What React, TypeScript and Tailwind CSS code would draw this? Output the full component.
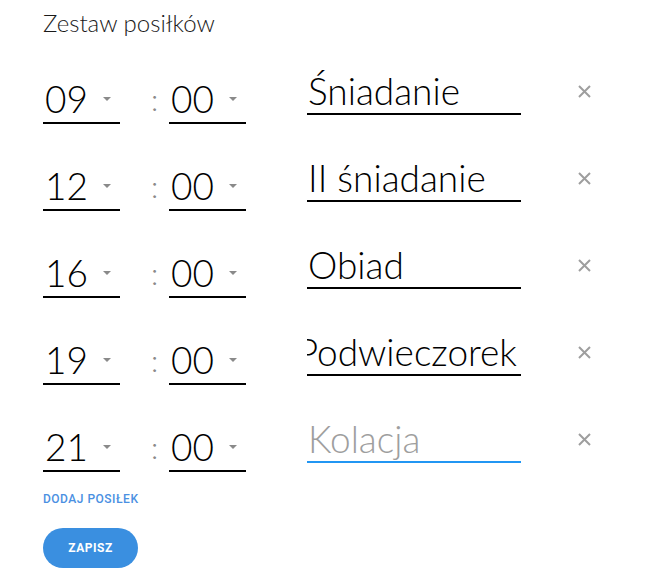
import React from 'react';

type Meal = { hour: string; minute: string; name: string; placeholder?: boolean; overflow?: boolean; focused?: boolean };

const meals: Meal[] = [
  { hour: '09', minute: '00', name: 'Śniadanie' },
  { hour: '12', minute: '00', name: 'II śniadanie' },
  { hour: '16', minute: '00', name: 'Obiad' },
  { hour: '19', minute: '00', name: 'Podwieczorek', overflow: true },
  { hour: '21', minute: '00', name: 'Kolacja', placeholder: true, focused: true },
];

function TimeSelect({ value }: { value: string }) {
  return (
    <div className="mt-[9px] w-[77px] h-[47px] border-b-2 border-black flex items-start justify-between">
      <span className="pl-[2px] text-[37px] leading-[43px] font-light text-black">{value}</span>
      <span className="mt-[20px] mr-[9px] w-0 h-0 border-l-[4px] border-r-[4px] border-t-[4px] border-l-transparent border-r-transparent border-t-[#8a8a8a]" />
    </div>
  );
}

function CloseIcon() {
  return (
    <svg width="13" height="13" viewBox="0 0 13 13" className="mt-[17px] ml-[57px]">
      <path d="M1 1L12 12M12 1L1 12" stroke="#9e9e9e" strokeWidth="2" strokeLinecap="butt" />
    </svg>
  );
}

function MealRow({ meal }: { meal: Meal }) {
  return (
    <div className="flex items-start">
      <TimeSelect value={meal.hour} />
      <div className="w-[49px] pl-[31px] mt-[13px] text-[30px] leading-[36px] font-light text-[#8a8a8a]">:</div>
      <TimeSelect value={meal.minute} />
      <div
        className={`ml-[61px] w-[214px] h-[47px] border-b-2 overflow-hidden whitespace-nowrap flex ${
          meal.focused ? 'border-[#2196f3]' : 'border-black'
        } ${meal.overflow ? 'justify-end pr-[4px]' : 'justify-start pl-[1px]'}`}
      >
        <span
          className={`shrink-0 text-[37px] leading-[45px] font-light ${meal.placeholder ? 'text-[#9e9e9e]' : 'text-black'}`}
        >
          {meal.name}
        </span>
      </div>
      <CloseIcon />
    </div>
  );
}

export default function App() {
  return (
    <div className="bg-white min-h-[585px] pl-[43px] pt-[9px]" style={{ fontFamily: 'Lato, "Noto Sans", sans-serif' }}>
      <h2 className="text-[24px] leading-[28px] font-light text-[#1a1a1a]">Zestaw posiłków</h2>
      <div className="mt-[31px] flex flex-col gap-[31px]">
        {meals.map((meal, i) => (
          <MealRow key={i} meal={meal} />
        ))}
      </div>
      <div
        className="mt-[20px] text-[12px] leading-[14px] font-medium uppercase tracking-[0.5px] text-[#4a90e2]"
        style={{ fontFamily: 'Roboto, "Liberation Sans", sans-serif' }}
      >
        Dodaj posiłek
      </div>
      <button
        type="button"
        className="mt-[22px] w-[95px] h-[40px] rounded-full bg-[#3a8fe0] text-white text-[12px] font-bold uppercase tracking-[0.5px]"
        style={{ fontFamily: 'Roboto, "Liberation Sans", sans-serif' }}
      >
        Zapisz
      </button>
    </div>
  );
}
